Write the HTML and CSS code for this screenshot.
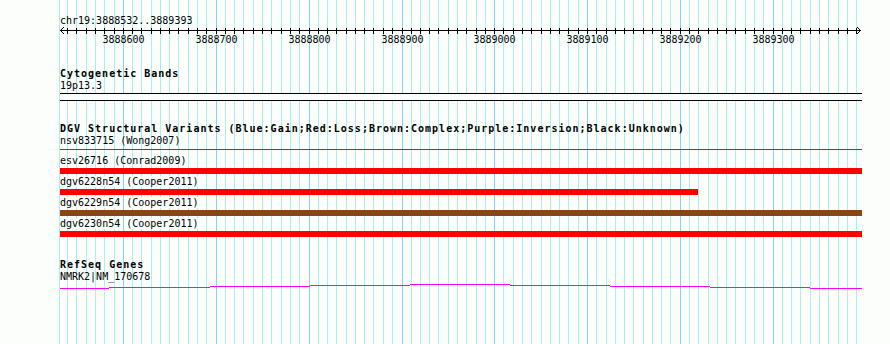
FILE: index.html
```html
<!DOCTYPE html>
<html lang="en">
<head>
  <meta charset="UTF-8" />
  <title>chr19:3888532..3889393</title>
  <link rel="stylesheet" href="styles.css">
</head>
<body>
  <div class="browser">
    <!-- grid, ruler line and ticks -->
    <svg class="grid" width="890" height="344" viewBox="0 0 890 344" shape-rendering="crispEdges">
      <defs>
        <path id="minorLines" d="M67.5 0V344M76.5 0V344M86.5 0V344M95.5 0V344M104.5 0V344M114.5 0V344M132.5 0V344M141.5 0V344M151.5 0V344M160.5 0V344M169.5 0V344M178.5 0V344M188.5 0V344M197.5 0V344M206.5 0V344M225.5 0V344M234.5 0V344M243.5 0V344M253.5 0V344M262.5 0V344M271.5 0V344M281.5 0V344M290.5 0V344M299.5 0V344M318.5 0V344M327.5 0V344M336.5 0V344M346.5 0V344M355.5 0V344M364.5 0V344M373.5 0V344M383.5 0V344M392.5 0V344M411.5 0V344M420.5 0V344M429.5 0V344M438.5 0V344M448.5 0V344M457.5 0V344M466.5 0V344M476.5 0V344M485.5 0V344M503.5 0V344M513.5 0V344M522.5 0V344M531.5 0V344M541.5 0V344M550.5 0V344M559.5 0V344M568.5 0V344M578.5 0V344M596.5 0V344M606.5 0V344M615.5 0V344M624.5 0V344M633.5 0V344M643.5 0V344M652.5 0V344M661.5 0V344M670.5 0V344M689.5 0V344M698.5 0V344M708.5 0V344M717.5 0V344M726.5 0V344M735.5 0V344M745.5 0V344M754.5 0V344M763.5 0V344M782.5 0V344M791.5 0V344M800.5 0V344M810.5 0V344M819.5 0V344M828.5 0V344M838.5 0V344M847.5 0V344M856.5 0V344" />
        <path id="majorLines" d="M123.5 0V344M216.5 0V344M309.5 0V344M402.5 0V344M494.5 0V344M587.5 0V344M680.5 0V344M773.5 0V344" />
        <clipPath id="tickBand"><rect x="0" y="28" width="890" height="6" /></clipPath>
      </defs>
      <path d="M59.5 0V344" stroke="#afeeee" />
      <use href="#minorLines" stroke="#afeeee" />
      <use href="#majorLines" stroke="#87cefa" />
      <g clip-path="url(#tickBand)" stroke="#000">
        <use href="#minorLines" />
        <use href="#majorLines" />
      </g>
      <path d="M60 30.5H861" stroke="#000" />
      <path d="M64 27L60.5 30.5L64 34M857 27L860.5 30.5L857 34" fill="none" stroke="#000" />
    </svg>

    <div class="tracks">
      <!-- Ruler -->
      <div class="locus">chr19:3888532..3889393</div>
      <div class="scale">
        <span style="left:63.5px">3888600</span>
        <span style="left:156.5px">3888700</span>
        <span style="left:249.5px">3888800</span>
        <span style="left:342.5px">3888900</span>
        <span style="left:434.5px">3889000</span>
        <span style="left:527.5px">3889100</span>
        <span style="left:620.5px">3889200</span>
        <span style="left:713.5px">3889300</span>
      </div>

      <!-- Cytogenetic Bands -->
      <section class="track">
        <div class="track-title">Cytogenetic Bands</div>
        <div class="feature-label">19p13.3</div>
        <div class="band"></div>
      </section>

      <!-- DGV -->
      <section class="track">
        <div class="track-title">DGV Structural Variants (Blue:Gain;Red:Loss;Brown:Complex;Purple:Inversion;Black:Unknown)</div>
        <div class="feature-label">nsv833715 (Wong2007)</div>
        <div class="thin-line loss"></div>
        <div class="variants">
          <div class="variant">
            <div class="feature-label">esv26716 (Conrad2009)</div>
            <div class="bar loss"></div>
          </div>
          <div class="variant">
            <div class="feature-label"><span class="tag">dgv6228n54</span> <span class="tag">(Cooper2011)</span></div>
            <div class="bar loss" style="width:638px"></div>
          </div>
          <div class="variant">
            <div class="feature-label"><span class="tag">dgv6229n54</span> <span class="tag">(Cooper2011)</span></div>
            <div class="bar complex"></div>
          </div>
          <div class="variant">
            <div class="feature-label"><span class="tag">dgv6230n54</span> <span class="tag">(Cooper2011)</span></div>
            <div class="bar loss"></div>
          </div>
        </div>
      </section>

      <!-- RefSeq -->
      <section class="track">
        <div class="track-title">RefSeq Genes</div>
        <div class="feature-label">NMRK2|NM_170678</div>
        <svg class="gene" width="802" height="5" viewBox="0 0 802 5" shape-rendering="crispEdges">
          <path d="M0 4.5H49M49 3.5H150M150 2.5H250M250 1.5H350M350 0.5H450M450 1.5H550M550 2.5H650M650 3.5H750M750 4.5H802" stroke="#ff00ff" fill="none" />
        </svg>
      </section>
    </div>
  </div>
</body>
</html>
```

FILE: styles.css
```css
body {
  margin: 0;
  background: #fbfefb;
  font-family: "DejaVu Sans Mono", "Liberation Mono", monospace;
  font-size: 10px;
  line-height: 12px;
  color: #000;
}

.browser {
  position: relative;
  width: 890px;
  height: 344px;
  overflow: hidden;
}

.grid {
  position: absolute;
  top: 0;
  left: 0;
}

.tracks {
  position: relative;
  width: 802px;
  padding: 15px 0 0 60px;
}

.locus {
  height: 12px;
}

/* ruler labels sit under their tick */
.scale {
  position: relative;
  height: 12px;
  margin-top: 7px;
}
.scale span {
  position: absolute;
  top: 0;
  transform: translateX(-50%);
}

.track {
  margin-top: 22px;
}
.track-title {
  font-weight: bold;
  letter-spacing: 1px;
  white-space: nowrap;
}
.feature-label {
  height: 12px;
  white-space: nowrap;
}
.tag {
  background: rgba(251, 254, 251, 0.85);
}

.band {
  margin-top: 1px;
  height: 6px;
  border-top: 1px solid #000;
  border-bottom: 1px solid #000;
  background: #fff;
}

.thin-line {
  margin-top: 2px;
  height: 1px;
}

.variants {
  display: flex;
  flex-direction: column;
  gap: 2px;
  margin-top: 5px;
}
.bar {
  margin-top: 1px;
  height: 6px;
}
.loss {
  background: #ff0000;
}
.complex {
  background: #8b4513;
}

.gene {
  display: block;
  margin-top: 1px;
}
```
